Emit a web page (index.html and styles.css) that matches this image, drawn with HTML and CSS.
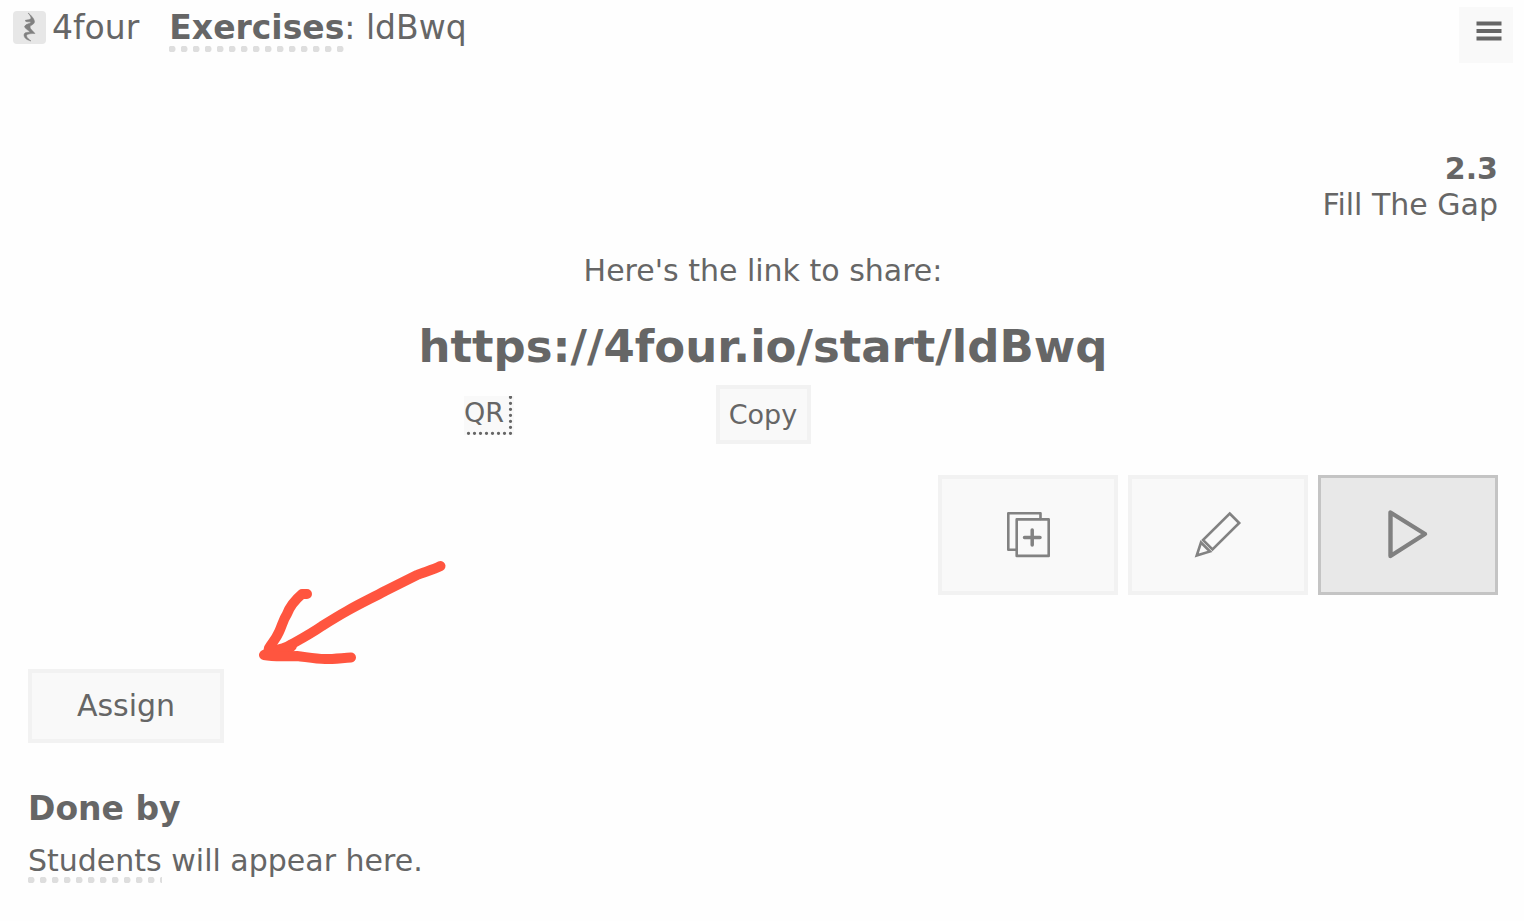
FILE: index.html
```html
<!DOCTYPE html>
<html lang="en">
<head>
    <meta charset="UTF-8">
    <meta name="viewport" content="width=device-width, initial-scale=1.0">
    <title>4four - Exercises: ldBwq</title>

    <link rel="stylesheet" href="styles.css">
</head>
<body>
    <header>
        <a class="brand" href="/">
            <svg class="logo" viewBox="0 0 33 33" aria-hidden="true">
                <rect width="33" height="33" rx="4" fill="#e7e7e7"/>
                <path d="M15 2C18 4 21.500 8 21.500 11C21 14 17 14 17 16C17 18 20 20 22 22.500C19 22.500 14.500 22.500 13.500 24.500C13.500 27 16 28 18 30C14 29 11 27 11 24C11 21.500 14 21 17 21.500C16 19 12 18 11.500 15.500C13 12.500 17 13 18 11C16 10.500 13 11.500 12 9.500C14 8.500 17 9 18 7.500C18 6 17 4 15 2Z" fill="#808080" stroke="#808080" stroke-width="0.500"/>
            </svg>
            <span>4four</span>
        </a>
        <div class="crumbs"><a class="dotted" href="/exercises"><b>Exercises</b></a>: ldBwq</div>
        <button class="menu" aria-label="Menu">
            <svg width="26" height="20" viewBox="0 0 26 20" stroke="#666" stroke-width="4">
                <path d="M0.500 2.500h25M0.500 10h25M0.500 17.500h25"/>
            </svg>
        </button>
    </header>

    <main>
        <div class="info">
            <b>2.3</b>
            <div>Fill The Gap</div>
        </div>

        <section class="share">
            <p>Here's the link to share:</p>
            <h1>https://4four.io/start/ldBwq</h1>
            <div class="share-tools">
                <button class="qr">
                    QR
                    <svg class="qr-dots" width="50" height="39" viewBox="0 0 50 39" fill="none" stroke="#666" stroke-width="3.300" stroke-linecap="round" stroke-dasharray="0 6" aria-hidden="true">
                        <path d="M46.500 37.300H4"/>
                        <path d="M46.500 31.300V1"/>
                    </svg>
                </button>
                <button class="copy">Copy</button>
            </div>
        </section>

        <div class="actions">
            <button class="action" aria-label="Duplicate">
                <svg width="60" height="60" viewBox="0 0 60 60" fill="none" stroke="#828282" stroke-width="2.600" stroke-linecap="round" stroke-linejoin="round">
                    <path d="M18 44.700H10.300V8.200H42.500V14"/>
                    <rect x="18.700" y="14.400" width="32" height="36.500"/>
                    <path d="M34.200 25v15M26.500 32.500h15.500" stroke-width="3.500"/>
                </svg>
            </button>
            <button class="action" aria-label="Edit">
                <svg width="60" height="60" viewBox="0 0 60 60" fill="none" stroke="#828282" stroke-width="2.600">
                    <path d="M41.700 8.500L51.200 18L24.500 44.500L15 35Z"/>
                    <path d="M13 37.500L22 46.500L8.700 50.500Z"/>
                </svg>
            </button>
            <button class="action play" aria-label="Play">
                <svg width="60" height="60" viewBox="0 0 60 60" fill="none" stroke="#808080" stroke-width="4.400" stroke-linejoin="round">
                    <path d="M12.500 7.500V51L47 29Z"/>
                </svg>
            </button>
        </div>

        <div class="assign">
            <button>Assign</button>
            <svg class="arrow" width="220" height="140" viewBox="0 0 220 140" fill="none" stroke="#ff553f" stroke-width="10" stroke-linecap="round" stroke-linejoin="round" aria-hidden="true">
                <path d="M200.500 26C193 30 184 32 177 35C165 41 155 46 145 51C132 58 119 64 107 71C98 76 90 81 82 86C72 93 61 99 52 104C46 108 40 110 34 110L28 113L43 113L52 106"/>
                <path d="M67 54L62 54C55 60 50 66 47 74C43 80 42 86 39 92C36 99 32 103 29 108L28 113L24 115C35 117 45 116 57 116C66 117 75 119 85 119C94 119 102 118 111 117.500"/>
            </svg>
        </div>

        <section class="done">
            <h2>Done by</h2>
            <p><span class="dotted">Students</span> will appear here.</p>
        </section>
    </main>
</body>
</html>
```

FILE: styles.css
```css
* {
    box-sizing: border-box;
}

body {
    margin: 0;
    font-family: "DejaVu Sans", Verdana, sans-serif;
    font-size: 30px;
    line-height: 36px;
    color: #666;
    background: #fefefe;
}

h1, h2, p {
    margin: 0;
}

a {
    color: inherit;
    text-decoration: none;
}

button {
    padding: 0;
    font: inherit;
    color: inherit;
    background: #f9f9f9;
    border: 4px solid #f2f2f2;
    cursor: pointer;
}

svg {
    display: block;
}

header {
    display: flex;
    align-items: flex-start;
    padding: 7px 11px 0 13px;
    font-size: 33px;
    line-height: 42px;
}

.brand {
    display: flex;
    gap: 6px;
    margin-right: 30px;
}

.logo {
    width: 33px;
    height: 33px;
    margin-top: 4px;
}

.dotted {
    padding-bottom: 5px;
    background: radial-gradient(circle at 3px 3px, #dedede 2px, #dedede 3px, transparent 4px) left bottom / 12px 6px repeat-x;
}

.menu {
    display: flex;
    justify-content: center;
    width: 54px;
    height: 56px;
    margin-left: auto;
    padding: 14px 0 0 6px;
    border: none;
}

main {
    padding: 88px 26px 24px 28px;
}

.info {
    text-align: right;
}

.share {
    margin-top: 30px;
    text-align: center;
}

.share h1 {
    margin-top: 30px;
    font-size: 45px;
    line-height: 56px;
}

.share-tools {
    display: grid;
    grid-template-columns: repeat(3, 274px);
    justify-content: center;
    justify-items: center;
    margin-top: 10px;
    font-size: 27px;
    line-height: 33px;
}

.qr {
    position: relative;
    width: 50px;
    height: 39px;
    margin-top: 11px;
    padding: 0 10px 6px 0;
    border: none;
}

.qr-dots {
    position: absolute;
    right: 0;
    bottom: 0;
}

.copy {
    width: 95px;
    height: 59px;
}

.actions {
    display: flex;
    justify-content: flex-end;
    gap: 10px;
    margin-top: 31px;
}

.action {
    display: flex;
    align-items: center;
    justify-content: center;
    width: 180px;
    height: 120px;
}

.play {
    background: #e8e8e8;
    border: 3px solid #c4c4c4;
}

.assign {
    position: relative;
    margin-top: 74px;
}

.assign button {
    display: block;
    width: 196px;
    height: 74px;
}

/* hand drawn pointer over the page */
.arrow {
    position: absolute;
    top: -129px;
    left: 212px;
    pointer-events: none;
}

.done {
    margin-top: 45px;
}

.done h2 {
    font-size: 33px;
    line-height: 42px;
}

.done p {
    margin-top: 13px;
}
```
